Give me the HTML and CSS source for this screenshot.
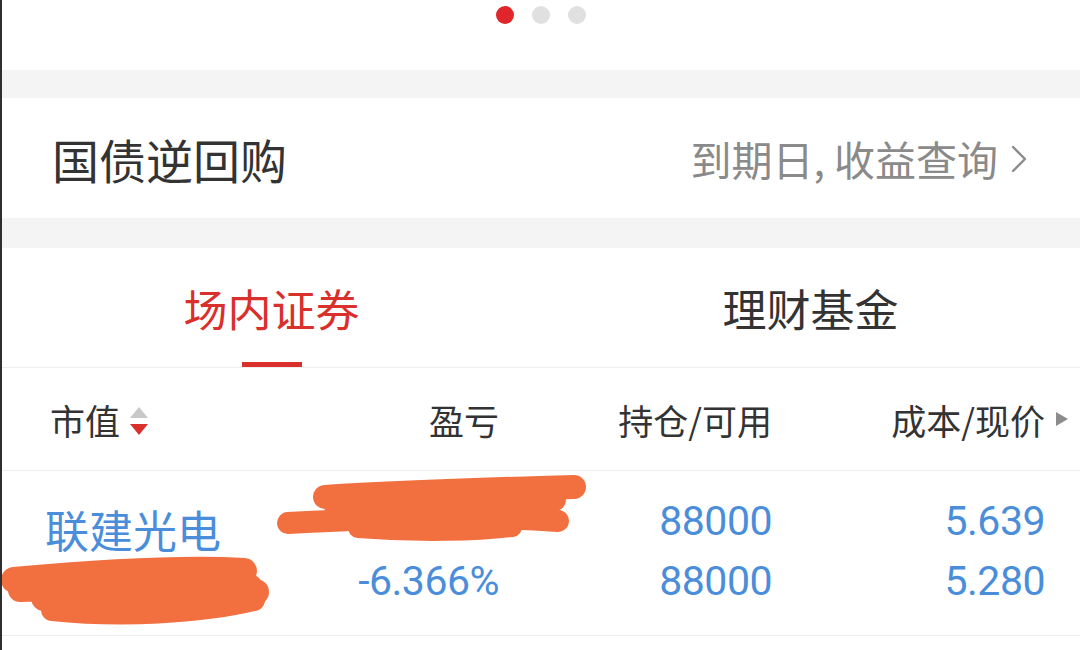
FILE: index.html
```html
<!DOCTYPE html>
<html lang="zh-CN">
<head>
    <meta charset="UTF-8">
    <meta name="viewport" content="width=device-width, initial-scale=1.0">
    <title>持仓</title>
    <link rel="stylesheet" href="styles.css">
</head>
<body>
    <div class="page">
        <div class="dots">
            <span class="dot active"></span>
            <span class="dot"></span>
            <span class="dot"></span>
        </div>

        <div class="band band-top"></div>

        <div class="repo-row">
            <div class="repo-title">国债逆回购</div>
            <div class="repo-link">
                <span>到期日, 收益查询</span>
                <svg class="chevron" width="16" height="28" viewBox="0 0 16 28">
                    <polyline points="2,2 14,14 2,26" fill="none" stroke="#8c8c8c" stroke-width="2.4" stroke-linecap="round" stroke-linejoin="round"/>
                </svg>
            </div>
        </div>

        <div class="band band-mid"></div>

        <div class="tabs">
            <div class="tab active">
                <span class="tab-label">场内证券</span>
                <span class="tab-bar"></span>
            </div>
            <div class="tab">
                <span class="tab-label">理财基金</span>
                <span class="tab-bar"></span>
            </div>
        </div>

        <!-- 表头 -->
        <div class="grid head">
            <div class="cell cell-left">
                市值
                <span class="sort">
                    <span class="sort-up"></span>
                    <span class="sort-down"></span>
                </span>
            </div>
            <div class="cell">盈亏</div>
            <div class="cell">持仓/可用</div>
            <div class="cell">成本/现价</div>
            <div class="cell-more"><span class="more-arrow"></span></div>
        </div>

        <!-- 持仓 -->
        <div class="grid stock">
            <div class="cell cell-left">
                <div class="line name">联建光电</div>
                <div class="line"></div>
            </div>
            <div class="cell">
                <div class="line"></div>
                <div class="line num">-6.366%</div>
            </div>
            <div class="cell">
                <div class="line num">88000</div>
                <div class="line num">88000</div>
            </div>
            <div class="cell">
                <div class="line num">5.639</div>
                <div class="line num">5.280</div>
            </div>
            <div class="cell-more"></div>
        </div>

        <!-- 涂抹遮挡 -->
        <svg class="scribble" width="1080" height="650" viewBox="0 0 1080 650">
            <g fill="none" stroke="#f2703f" stroke-linecap="round" stroke-linejoin="round">
                <path d="M325,497 C400,492 500,489 574,487" stroke-width="24"/>
                <path d="M335,506 C420,503 500,502 555,500" stroke-width="22"/>
                <path d="M288,523 C380,518 480,515 558,521" stroke-width="22"/>
                <path d="M358,528 C420,533 480,531 512,527" stroke-width="20"/>
                <path d="M14,580 C80,574 180,567 244,571" stroke-width="26"/>
                <path d="M20,590 C100,588 200,586 250,586" stroke-width="24"/>
                <path d="M44,598 C120,596 200,592 256,592" stroke-width="26"/>
                <path d="M52,610 C120,617 200,613 254,600" stroke-width="22"/>
            </g>
        </svg>
    </div>
</body>
</html>
```

FILE: styles.css
```css
* {
    margin: 0;
    padding: 0;
    box-sizing: border-box;
}

body {
    font-family: "Noto Sans CJK SC", "Noto Sans", sans-serif;
    background: #fff;
    color: #333;
}

.page {
    position: relative;
    width: 1080px;
    height: 650px;
    border-left: 2px solid #2e2e2e;
    overflow: hidden;
}

.dots {
    height: 70px;
    display: flex;
    justify-content: center;
    gap: 18px;
    padding-top: 6px;
}

.dot {
    width: 18px;
    height: 18px;
    border-radius: 50%;
    background: #e0e0e0;
}

.dot.active {
    background: #e0262b;
}

.band {
    background: #f4f4f4;
}

.band-top {
    height: 28px;
}

.band-mid {
    height: 30px;
}

.repo-row {
    height: 120px;
    display: flex;
    align-items: center;
    justify-content: space-between;
    padding: 0 53px 0 50px;
}

.repo-title {
    font-size: 47px;
    color: #333;
}

.repo-link {
    display: flex;
    align-items: center;
    gap: 13px;
    font-size: 41px;
    color: #8a8a8a;
}

.chevron {
    margin-top: 2px;
}

.tabs {
    height: 120px;
    display: flex;
    border-bottom: 1px solid #eeeeee;
}

.tab {
    flex: 1;
    display: flex;
    flex-direction: column;
    align-items: center;
    padding-top: 32px;
}

.tab-label {
    font-size: 44px;
    line-height: 56px;
    color: #333;
}

.tab-bar {
    margin-top: auto;
    width: 60px;
    height: 5px;
}

.tab.active .tab-label {
    color: #d9302c;
}

.tab.active .tab-bar {
    background: #d9302c;
}

.grid {
    display: grid;
    grid-template-columns: 199px 250px 273px 273px 33px;
    padding-left: 48px;
    border-bottom: 1px solid #eeeeee;
}

.cell {
    text-align: right;
}

.cell-left {
    text-align: left;
}

.head {
    height: 103px;
    align-items: center;
    font-size: 35px;
    color: #333;
}

.head .cell-left {
    display: flex;
    align-items: center;
    gap: 10px;
}

.sort {
    display: flex;
    flex-direction: column;
    gap: 6px;
    margin-top: 4px;
}

.sort-up {
    width: 0;
    height: 0;
    border-left: 9px solid transparent;
    border-right: 9px solid transparent;
    border-bottom: 11px solid #c8c8c8;
}

.sort-down {
    width: 0;
    height: 0;
    border-left: 9px solid transparent;
    border-right: 9px solid transparent;
    border-top: 11px solid #d9302c;
}

.cell-more {
    display: flex;
    align-items: center;
    padding-left: 11px;
}

.more-arrow {
    width: 0;
    height: 0;
    border-top: 7px solid transparent;
    border-bottom: 7px solid transparent;
    border-left: 12px solid #8c8c8c;
}

.stock {
    height: 165px;
    padding-top: 20px;
    color: #4a8edb;
}

.line {
    height: 60px;
    line-height: 60px;
}

.name {
    font-size: 44px;
    padding-top: 8px;
    margin-left: -5px;
}

.num {
    font-family: Roboto, "Noto Sans", sans-serif;
    font-size: 41px;
    letter-spacing: -0.5px;
}

.scribble {
    position: absolute;
    left: -2px;
    top: 0;
    pointer-events: none;
}
```
